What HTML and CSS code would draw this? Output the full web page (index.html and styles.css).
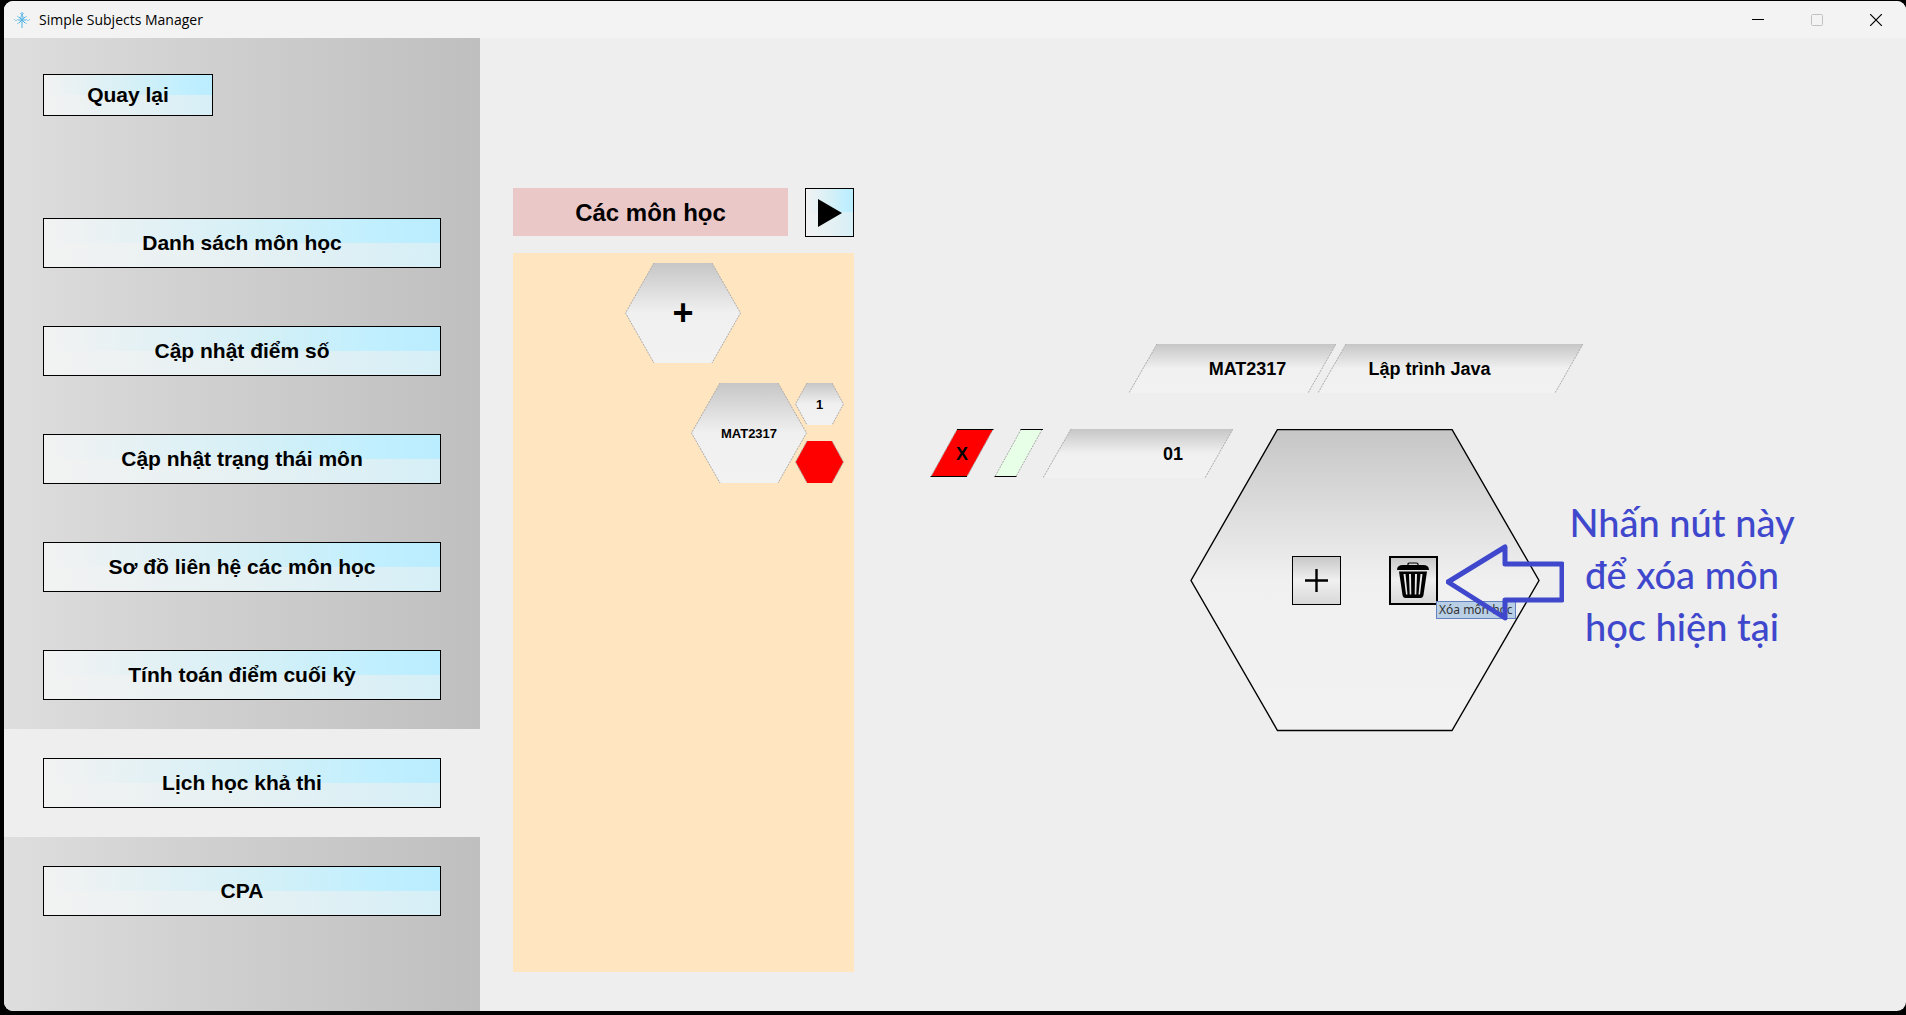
FILE: index.html
```html
<!DOCTYPE html>
<html lang="vi">
<head>
<meta charset="utf-8">
<title>Simple Subjects Manager</title>
<link rel="stylesheet" href="styles.css">
</head>
<body>
<svg class="defs" width="0" height="0" aria-hidden="true">
  <defs>
    <linearGradient id="metal" x1="0" y1="0" x2="0" y2="1">
      <stop offset="0" stop-color="#c6c6c6"/>
      <stop offset="0.5" stop-color="#f0f0f0"/>
      <stop offset="1" stop-color="#f2f2f2"/>
    </linearGradient>
  </defs>
</svg>
<div class="window">
  <header class="titlebar">
    <svg class="app-icon" width="18" height="18" viewBox="0 0 18 18" aria-hidden="true">
      <g stroke="#4db0e4" fill="none">
        <path d="M9 1v16M5 9h8M6 6l6 6M12 6l-6 6" stroke-width="1"/>
        <path d="M7 2l2 2 2-2M9 4l-2 3M9 4l2 3M1 8l2 2 2-2M17 8l-2 2-2-2M4 5l3 2M14 5l-3 2M4 13l3-2M14 13l-3-2" stroke-width="1" opacity="0.6"/>
      </g>
    </svg>
    <h1 class="title">Simple Subjects Manager</h1>
    <div class="controls">
      <button class="control" aria-label="Minimize"><svg width="12" height="12"><path d="M0 5.500h12" stroke="#000"/></svg></button>
      <button class="control" aria-label="Maximize" disabled><svg width="12" height="12"><rect x="0.500" y="0.500" width="11" height="11" rx="1" fill="none" stroke="#c0c0c0"/></svg></button>
      <button class="control" aria-label="Close"><svg width="12" height="12"><path d="M0 0l12 12M12 0L0 12" stroke="#000" stroke-width="1.200"/></svg></button>
    </div>
  </header>
  <div class="content">
    <nav class="sidebar">
      <div class="back"><button class="glass back-button">Quay lại</button></div>
      <ul class="menu">
        <li class="menu-item"><button class="glass menu-button">Danh sách môn học</button></li>
        <li class="menu-item"><button class="glass menu-button">Cập nhật điểm số</button></li>
        <li class="menu-item"><button class="glass menu-button">Cập nhật trạng thái môn</button></li>
        <li class="menu-item"><button class="glass menu-button">Sơ đồ liên hệ các môn học</button></li>
        <li class="menu-item"><button class="glass menu-button">Tính toán điểm cuối kỳ</button></li>
        <li class="menu-item selected"><button class="glass menu-button">Lịch học khả thi</button></li>
        <li class="menu-item"><button class="glass menu-button">CPA</button></li>
      </ul>
    </nav>
    <section class="subjects">
      <div class="subjects-head">
        <h2 class="subjects-title">Các môn học</h2>
        <button class="glass play" aria-label="Tiếp"><svg width="24" height="28"><path d="M0 0L24 14L0 28Z"/></svg></button>
      </div>
      <div class="subjects-list">
        <button class="shape hex add">
          <svg width="116" height="100"><path d="M29 0H87L115.500 50L87 100H29L0.500 50Z" fill="url(#metal)"/><path class="edge" d="M29 0L0.500 50L29 100M87 0L115.500 50L87 100"/></svg>
          <span>+</span>
        </button>
        <div class="subject">
          <button class="shape hex">
            <svg width="116" height="100"><path d="M29 0H87L115.500 50L87 100H29L0.500 50Z" fill="url(#metal)"/><path class="edge" d="M29 0L0.500 50L29 100M87 0L115.500 50L87 100"/></svg>
            <span>MAT2317</span>
          </button>
          <div class="subject-side">
            <button class="shape hex-small">
              <svg width="49" height="42"><path d="M12 0H37L48.500 21L37 42H12L0.500 21Z" fill="url(#metal)"/><path class="edge" d="M12 0L0.500 21L12 42M37 0L48.500 21L37 42"/></svg>
              <span>1</span>
            </button>
            <button class="shape hex-small" aria-label="Xóa MAT2317">
              <svg width="49" height="42"><path d="M12 0H37L48.500 21L37 42H12L0.500 21Z" fill="#f00"/><path class="edge" d="M12 0L0.500 21L12 42M37 0L48.500 21L37 42"/></svg>
            </button>
          </div>
        </div>
      </div>
    </section>
    <main class="detail">
      <div class="diagram">
        <div class="row names">
          <button class="shape slant code">
            <svg width="207" height="49"><path d="M28 0H207L179 49H0Z" fill="url(#metal)"/><path class="edge" d="M28 0L0 49M207 0L179 49"/></svg>
            <span>MAT2317</span>
          </button>
          <button class="shape slant name">
            <svg width="265" height="49"><path d="M28 0H265L237 49H0Z" fill="url(#metal)"/><path class="edge" d="M28 0L0 49M265 0L237 49"/></svg>
            <span>Lập trình Java</span>
          </button>
        </div>
        <div class="row">
          <button class="shape slant remove">
            <svg width="64" height="49"><path d="M27 0.500H63L37 47.500H1Z" fill="#f00"/><path class="edge" d="M27 0.500L1 47.500M63 0.500L37 47.500"/><path d="M27 0.500H63.500M0.500 47.500H37" stroke="#000"/></svg>
            <span>X</span>
          </button>
          <button class="shape slant color" aria-label="Màu">
            <svg width="49" height="49"><path d="M27 0.500H48L22 47.500H1Z" fill="#e6ffe6"/><path class="edge" d="M27 0.500L1 47.500M48 0.500L22 47.500"/><path d="M26.500 0.500H49M0.500 47.500H22.500" stroke="#000"/></svg>
          </button>
          <button class="shape slant group">
            <svg width="190" height="49"><path d="M28 0H190L162 49H0Z" fill="url(#metal)"/><path class="edge" d="M28 0L0 49M190 0L162 49"/></svg>
            <span>01</span>
          </button>
          <div class="cell">
            <svg class="cell-shape" width="350" height="303"><path d="M87.500 0.500H262L349 151.500L262 301.500H87.500L1 151.500Z" fill="url(#metal)" stroke="#000" stroke-width="1.400"/></svg>
            <button class="tool" aria-label="Thêm"><svg width="23" height="23"><path d="M11.500 0V23M0 11.500H23" stroke="#000" stroke-width="2.400"/></svg></button>
            <div class="tool-wrap">
              <button class="tool active" aria-label="Xóa" aria-describedby="tip">
                <svg width="33" height="37" viewBox="0 0 33 37"><path d="M11 3V2Q11 1 12.500 1H19.500Q21 1 21 2V3" fill="none" stroke="#000" stroke-width="1.200"/><path d="M0 8Q0 3 6 3H26Q32 3 32 8Z"/><path fill-rule="evenodd" d="M2 9.500H30L26.500 33Q26 36 23.500 36H8.500Q6 36 5.500 33ZM6.500 12L9 32.500H10.500L8.500 12ZM12 12L12.700 32.500H14.300L14 12ZM18 12L17.700 32.500H19.300L20 12ZM23.500 12L21.500 32.500H23L25.500 12Z"/></svg>
              </button>
              <span class="tooltip" id="tip" role="tooltip">Xóa môn học</span>
            </div>
            <svg class="arrow" width="118" height="77" aria-hidden="true"><path d="M2 38L59 3V20H116V56H59V74Z" fill="none" stroke="#3f48cc" stroke-width="5" stroke-linejoin="round"/></svg>
          </div>
          <p class="note">Nhấn nút này<br>để xóa môn<br>học hiện tại</p>
        </div>
      </div>
    </main>
  </div>
</div>
</body>
</html>
```
FILE: styles.css
```css
* { box-sizing: border-box; }

body {
  margin: 0;
  padding: 1px 0 4px 4px;
  min-height: 100vh;
  display: flex;
  background: #000;
  color: #000;
  font-family: "Liberation Sans", Arial, sans-serif;
}

.defs { position: absolute; }
svg { flex: none; }

button {
  border: 0;
  padding: 0;
  background: none;
  color: inherit;
  font: inherit;
}

.window {
  flex: 1;
  display: flex;
  flex-direction: column;
  overflow: hidden;
  border-radius: 9px;
  background: #eee;
}

.titlebar {
  height: 37px;
  display: flex;
  align-items: center;
  gap: 8px;
  padding: 0 1px 0 9px;
  background: #f3f3f3;
}

.title {
  flex: 1;
  margin: 0;
  font: 400 14px/20px "Segoe UI", "Open Sans", sans-serif;
}

.controls { display: flex; }

.control {
  width: 59px;
  height: 37px;
  display: grid;
  place-items: center;
}

.content {
  flex: 1;
  display: flex;
}

/* Sidebar */
.sidebar {
  width: 476px;
  flex: none;
  background: linear-gradient(90deg, #dedede, #d2d2d2 35%, #bfbfbf);
}

.back { padding: 36px 39px 73px; }

.glass {
  border: 1px solid #000;
  background:
    linear-gradient(90deg, #f2f2f2, #d4f0f7 55%, #c0efff 85%, #baedff) top / 100% 50% no-repeat,
    linear-gradient(90deg, #f2f2f2, #e6f1f3 50%, #d6eff7) bottom / 100% 50% no-repeat;
  font-size: 21px;
  font-weight: 700;
}

.back-button {
  display: block;
  width: 170px;
  height: 42px;
}

.menu {
  margin: 0;
  padding: 0;
  list-style: none;
}

.menu-item { padding: 29px 39px; }
.menu-item.selected { background: #eee; }

.menu-button {
  display: block;
  width: 100%;
  height: 50px;
}

/* Subject list */
.subjects {
  width: 341px;
  flex: none;
  display: flex;
  flex-direction: column;
  gap: 16px;
  margin: 150px 0 39px 33px;
}

.subjects-head {
  display: flex;
  justify-content: space-between;
}

.subjects-title {
  width: 275px;
  height: 48px;
  margin: 0;
  background: #ebc8c8;
  font-size: 24px;
  line-height: 49px;
  text-align: center;
}

.play {
  width: 49px;
  height: 49px;
  display: grid;
  place-items: center;
}

.subjects-list {
  flex: 1;
  display: flex;
  flex-direction: column;
  gap: 20px;
  padding: 10px 10px 10px 9px;
  background: #ffe6c0;
}

/* Drawn outline with a text label on top of it */
.shape {
  display: grid;
  place-items: center;
  font-size: 13px;
  font-weight: 700;
}

.shape > * { grid-area: 1 / 1; }
.shape > span { z-index: 1; }

.edge {
  fill: none;
  stroke: #aaa;
  stroke-dasharray: 2 1;
}

.hex {
  width: 116px;
  height: 100px;
}

.add {
  align-self: center;
  font-size: 36px;
}

.subject {
  display: flex;
  justify-content: flex-end;
}

.subject-side {
  display: flex;
  flex-direction: column;
  justify-content: space-between;
  margin-left: -12px;
}

.hex-small {
  width: 49px;
  height: 42px;
}

/* Detail diagram */
.detail {
  flex: 1;
  display: flex;
  justify-content: center;
  padding-top: 306px;
}

.diagram {
  width: 900px;
  display: flex;
  flex-direction: column;
  gap: 36px;
}

.row {
  display: flex;
  align-items: flex-start;
}

.names { padding-left: 199px; }

.slant { font-size: 18px; }
.slant > span { padding-top: 2px; }
.code > span { padding-left: 30px; }
.name { margin-left: -18px; }
.name > span { padding-right: 42px; }
.group > span { padding-left: 70px; }

.cell {
  position: relative;
  width: 350px;
  height: 303px;
  flex: none;
  display: flex;
  justify-content: center;
  align-items: center;
  gap: 48px;
  margin-left: -43px;
}

.cell-shape {
  position: absolute;
  inset: 0;
}

.tool {
  position: relative;
  width: 49px;
  height: 49px;
  display: grid;
  place-items: center;
  border: 1px solid #000;
  background: linear-gradient(#c8c8c8, #f0f0f0 50%, #d8d8d8);
}

.active { border-width: 2px; }
.tool-wrap { position: relative; }

.tooltip {
  position: absolute;
  top: 45px;
  left: 47px;
  height: 18px;
  padding: 0 2px;
  border: 1px solid #6382bf;
  background: #b8cfe5;
  color: #333;
  font: 400 12px/16px "Noto Sans", sans-serif;
  white-space: nowrap;
}

.arrow {
  position: absolute;
  top: 115px;
  left: 256px;
}

.note {
  width: 240px;
  margin: 67px 0 0 22px;
  color: #3f48cc;
  font: 500 38px/52px "Comic Sans MS", Lato, sans-serif;
  text-align: center;
  white-space: nowrap;
}
```
